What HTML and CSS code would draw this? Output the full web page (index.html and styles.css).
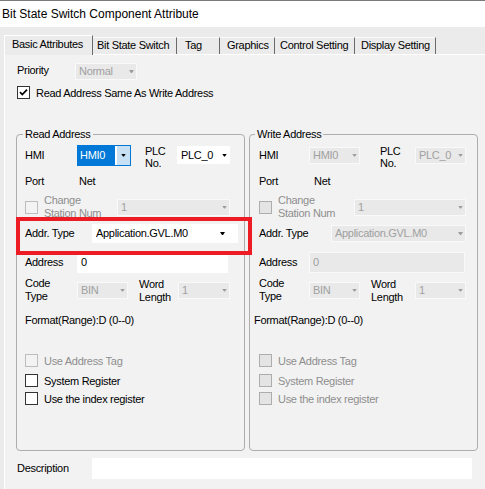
FILE: index.html
```html
<!DOCTYPE html>
<html>
<head>
<meta charset="utf-8">
<link rel="stylesheet" href="styles.css">
</head>
<body>
<div class="titlebar">Bit State Switch Component Attribute</div>
<div class="tabstrip">
  <div class="tab active t1">Basic Attributes</div>
  <div class="tab t2">Bit State Switch</div>
  <div class="tab t3">Tag</div>
  <div class="tab t4">Graphics</div>
  <div class="tab t5">Control Setting</div>
  <div class="tab t6">Display Setting</div>
</div>
<div class="panel">
  <div class="row prio">
    <span class="lbl w58 up1">Priority</span>
    <div class="sel dis w62"><span class="val">Normal</span><i class="arr"></i></div>
  </div>
  <div class="row chkrow">
    <span class="cb"><svg width="11" height="11" viewBox="0 0 11 11"><path d="M2 5.2 L4.3 7.6 L9 2.6" fill="none" stroke="#000" stroke-width="1.7"/></svg></span>
    <span>Read Address Same As Write Address</span>
  </div>

  <div class="groups">
    <fieldset class="grp read">
      <legend>Read Address</legend>
      <div class="row r1">
        <span class="lbl w52">HMI</span>
        <div class="sel focus w54"><span class="hl">HMI0</span><span class="btn"><i class="arr"></i></span></div>
        <span class="lbl2 plc w32 ml14">PLC<br>No.</span>
        <div class="sel w53"><span class="val">PLC_0</span><i class="arr"></i></div>
      </div>
      <div class="row r2">
        <span class="lbl w54">Port</span>
        <span class="lbl">Net</span>
      </div>
      <div class="row r3">
        <span class="cb dis"></span>
        <span class="lbl2 gray w73">Change<br>Station Num</span>
        <div class="sel dis w113"><span class="val">1</span><i class="arr"></i></div>
      </div>
      <div class="row r4 mark">
        <span class="lbl w67">Addr. Type</span>
        <div class="sel w146 h19"><span class="val">Application.GVL.M0</span><i class="arr far"></i></div>
      </div>
      <div class="row r5">
        <span class="lbl w52">Address</span>
        <div class="inp w151">0</div>
      </div>
      <div class="row r6">
        <span class="lbl2 w52">Code<br>Type</span>
        <div class="sel dis w51"><span class="val">BIN</span><i class="arr"></i></div>
        <span class="lbl2 w39 ml11 dn1">Word<br>Length</span>
        <div class="sel dis w52"><span class="val">1</span><i class="arr"></i></div>
      </div>
      <div class="row r7">
        <span class="lbl">Format(Range):D (0--0)</span>
      </div>
      <div class="row r8">
        <span class="cb dis"></span>
        <span class="gray">Use Address Tag</span>
      </div>
      <div class="row r9">
        <span class="cb"></span>
        <span>System Register</span>
      </div>
      <div class="row r10">
        <span class="cb"></span>
        <span>Use the index register</span>
      </div>
    </fieldset>

    <fieldset class="grp write">
      <legend>Write Address</legend>
      <div class="row r1">
        <span class="lbl w50">HMI</span>
        <div class="sel dis w51"><span class="val">HMI0</span><i class="arr"></i></div>
        <span class="lbl2 plc w35 ml20">PLC<br>No.</span>
        <div class="sel dis w51"><span class="val">PLC_0</span><i class="arr"></i></div>
      </div>
      <div class="row r2">
        <span class="lbl w55">Port</span>
        <span class="lbl">Net</span>
      </div>
      <div class="row r3">
        <span class="cb dis2"></span>
        <span class="lbl2 gray w76">Change<br>Station Num</span>
        <div class="sel dis w112"><span class="val">1</span><i class="arr"></i></div>
      </div>
      <div class="row r4">
        <span class="lbl w72">Addr. Type</span>
        <div class="sel dis w135"><span class="val">Application.GVL.M0</span><i class="arr"></i></div>
      </div>
      <div class="row r5">
        <span class="lbl w50">Address</span>
        <div class="inp dis w156">0</div>
      </div>
      <div class="row r6">
        <span class="lbl2 w50">Code<br>Type</span>
        <div class="sel dis w51"><span class="val">BIN</span><i class="arr"></i></div>
        <span class="lbl2 w44 ml11 dn1">Word<br>Length</span>
        <div class="sel dis w51"><span class="val">1</span><i class="arr"></i></div>
      </div>
      <div class="row r7 shift">
        <span class="lbl">Format(Range):D (0--0)</span>
      </div>
      <div class="row r8">
        <span class="cb dis2"></span>
        <span class="gray">Use Address Tag</span>
      </div>
      <div class="row r9">
        <span class="cb dis2"></span>
        <span class="gray">System Register</span>
      </div>
      <div class="row r10">
        <span class="cb dis2"></span>
        <span class="gray">Use the index register</span>
      </div>
    </fieldset>
  </div>

  <div class="row desc">
    <span class="lbl w75">Description</span>
    <div class="inp w380"></div>
  </div>
</div>
</body>
</html>
```

FILE: styles.css
```css
* { box-sizing: border-box; }
html, body { margin: 0; padding: 0; }
body {
  width: 485px;
  height: 489px;
  overflow: hidden;
  background: #ebebeb;
  font-family: "Liberation Sans", Arial, sans-serif;
  font-size: 11px;
  letter-spacing: -0.3px;
  color: #000;
}

.titlebar {
  height: 27px;
  border-top: 1px solid #7a7a7a;
  background: #fff;
  padding-left: 2px;
  font-size: 12px;
  letter-spacing: 0;
  line-height: 26px;
  white-space: nowrap;
}

.tabstrip {
  height: 27px;
  background: #ebebeb;
  display: flex;
  align-items: flex-end;
  padding-left: 4px;
  position: relative;
  z-index: 2;
}
.tab {
  height: 17px;
  line-height: 14px;
  border-top: 1px solid #fafafa;
  border-right: 1px solid #6a6a6a;
  white-space: nowrap;
  flex: none;
}
.tab.active {
  height: 20px;
  line-height: 17px;
  border-left: 1px solid #fff;
  border-top: 1px solid #fff;
  margin-bottom: -1px;
  background: #ebebeb;
}
.t1 { width: 89px; padding-left: 7px; }
.t2 { width: 84px; padding-left: 4px; }
.t3 { width: 43px; padding-left: 8px; }
.t4 { width: 55px; padding-left: 7px; }
.t5 { width: 80px; padding-left: 5px; }
.t6 { width: 81px; padding-left: 6px; }

.panel {
  margin-left: 4px;
  height: 435px;
  background: #f2f2f2;
  border-top: 1px solid #fff;
  border-left: 1px solid #fff;
  padding-left: 11px;
  padding-top: 8px;
}

.row {
  display: flex;
  align-items: center;
  white-space: nowrap;
}
.lbl { display: block; flex: none; line-height: 13px; }
.lbl2 { display: block; flex: none; line-height: 13px; }
.lbl2.plc { line-height: 12px; margin-top: 3px; }
.up1 { margin-bottom: 2px; }
.dn1 { margin-top: 2px; }
.gray { color: #8e8e8e; }

.prio { height: 17px; margin-left: 1px; }
.chkrow { height: 13px; margin-top: 6px; margin-left: 1px; }

/* selects */
.sel {
  display: flex;
  align-items: center;
  flex: none;
  height: 18px;
  background: #fff;
  padding-left: 4px;
  line-height: 13px;
}
.sel .val { flex: 1; overflow: hidden; }
.arr {
  display: block;
  flex: none;
  width: 5px;
  height: 3px;
  background: #000;
  clip-path: polygon(0 0, 5px 0, 3px 3px, 2px 3px);
  margin-right: 3px;
}
.arr.far { margin-right: 13px; }
.sel.h19 { height: 19px; }
.sel.dis {
  height: 17px;
  background: #e9e9e9;
  border: 1px solid #f9f9f9;
  color: #a0a0a0;
  padding-left: 3px;
}
.sel.dis .arr { background: #9c9c9c; margin-right: 2px; }

.sel.focus {
  height: 21px;
  padding: 0;
  border: 1px solid #0078d7;
  align-items: stretch;
}
.hl {
  display: block;
  width: 37px;
  background: #0078d7;
  color: #fff;
  padding-left: 2px;
  line-height: 19px;
}
.btn {
  display: flex;
  align-items: center;
  justify-content: center;
  margin-left: auto;
  width: 13px;
  background: #c7e0f4;
}
.btn .arr { margin: 0; }

/* inputs */
.inp {
  flex: none;
  height: 21px;
  background: #fff;
  padding-left: 4px;
  line-height: 21px;
}
.inp.dis {
  background: #e9e9e9;
  border: 1px solid #f9f9f9;
  color: #a0a0a0;
  padding-left: 3px;
  line-height: 19px;
}

/* checkboxes */
.cb {
  display: block;
  flex: none;
  width: 13px;
  height: 13px;
  border: 1px solid #333;
  background: #fff;
  margin-right: 6px;
}
.cb svg { display: block; }
.cb.dis { border-color: #bdbdbd; background: #f3f3f3; }
.cb.dis2 { border-color: #adadad; background: #e4e4e4; }

/* widths */
.w32 { width: 32px; } .w35 { width: 35px; } .w39 { width: 39px; }
.w44 { width: 44px; } .w50 { width: 50px; } .w51 { width: 51px; }
.w52 { width: 52px; } .w53 { width: 53px; } .w54 { width: 54px; }
.w55 { width: 55px; } .w58 { width: 58px; } .w62 { width: 62px; }
.w67 { width: 67px; } .w72 { width: 72px; } .w73 { width: 73px; }
.w75 { width: 75px; } .w76 { width: 76px; } .w112 { width: 112px; }
.w113 { width: 113px; } .w135 { width: 135px; } .w146 { width: 146px; }
.w151 { width: 151px; } .w156 { width: 156px; } .w380 { width: 380px; }
.ml11 { margin-left: 11px; } .ml14 { margin-left: 14px; } .ml20 { margin-left: 20px; }

/* group boxes */
.groups {
  display: flex;
  gap: 4px;
  margin-top: 28px;
}
.grp {
  margin: 0;
  width: 229px;
  min-width: 0;
  border: 1px solid #adadad;
  border-radius: 4px;
  padding: 1px 0 45px 8px;
}
.grp.write { padding-left: 9px; }
.grp legend {
  padding: 0 2px;
  margin-left: -2px;
  line-height: 14px;
  height: 14px;
}
.grp.write legend { margin-left: -4px; }

.r1 { height: 26px; }
.r2 { height: 13px; margin-top: 7px; }
.r3 { height: 26px; margin-top: 6px; }
.r4 { height: 19px; margin-top: 4px; }
.r5 { height: 21px; margin-top: 9px; }
.r6 { height: 26px; margin-top: 4px; }
.r7 { height: 13px; margin-top: 11px; }
.r8 { height: 13px; margin-top: 27px; }
.r9 { height: 13px; margin-top: 7px; }
.r10 { height: 13px; margin-top: 5px; }
.shift { margin-left: -5px; }

.mark { position: relative; }
.mark::before {
  content: "";
  position: absolute;
  left: -9px;
  top: -7px;
  width: 228px;
  height: 30px;
  border: 4px solid #ed1c24;
  pointer-events: none;
}

.desc { height: 21px; margin-top: 7px; margin-left: 1px; }
```
